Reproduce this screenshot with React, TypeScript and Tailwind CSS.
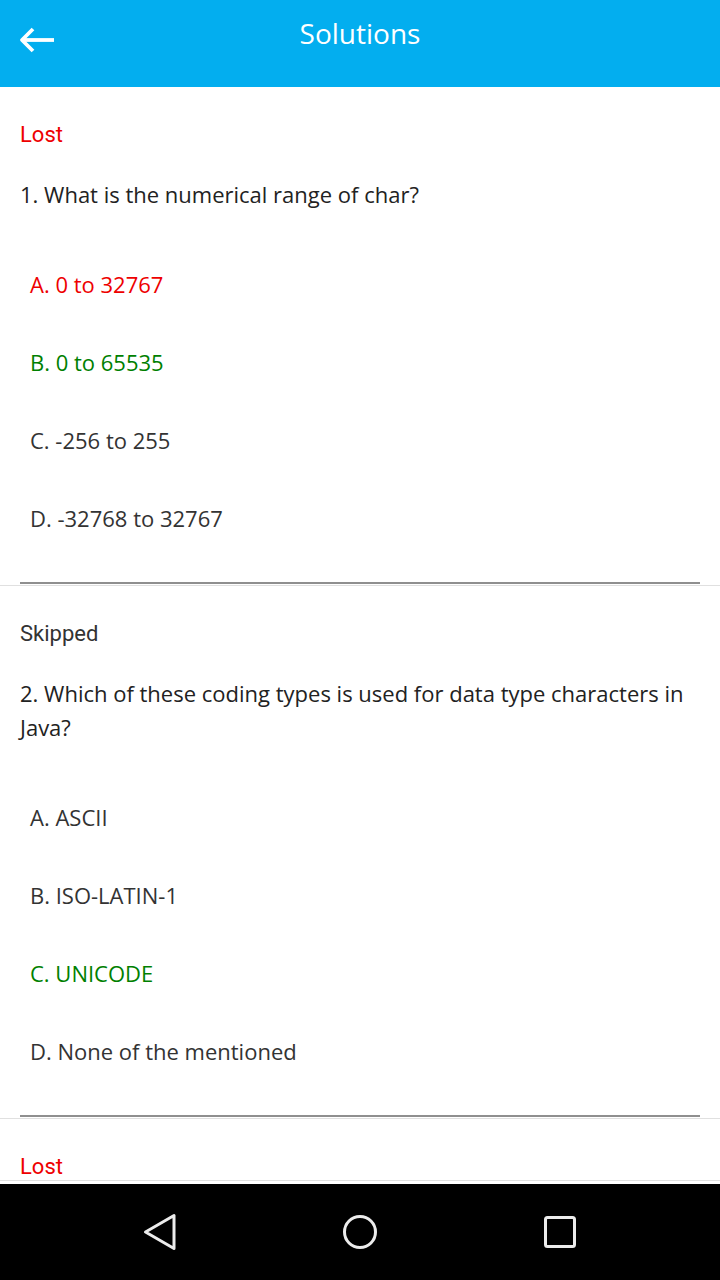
import React from 'react';

type Option = { text: string; tone?: 'wrong' | 'right' };
type Solution = { status: 'Lost' | 'Skipped'; question?: string; options: Option[] };

const solutions: Solution[] = [
  {
    status: 'Lost',
    question: '1. What is the numerical range of char?',
    options: [
      { text: 'A. 0 to 32767', tone: 'wrong' },
      { text: 'B. 0 to 65535', tone: 'right' },
      { text: 'C. -256 to 255' },
      { text: 'D. -32768 to 32767' },
    ],
  },
  {
    status: 'Skipped',
    question: '2. Which of these coding types is used for data type characters in Java?',
    options: [
      { text: 'A. ASCII' },
      { text: 'B. ISO-LATIN-1' },
      { text: 'C. UNICODE', tone: 'right' },
      { text: 'D. None of the mentioned' },
    ],
  },
  { status: 'Lost', options: [] },
];

const toneClass = (tone?: Option['tone']) =>
  tone === 'wrong' ? 'text-[#ee0000]' : tone === 'right' ? 'text-[#008000]' : 'text-[#333333]';

function SolutionCard({ item }: { item: Solution }) {
  return (
    <section className="border-b border-[#e0e0e0] px-5 pt-[36px] pb-px">
      <p
        className={`font-['Roboto',sans-serif] text-[22px] leading-[24px] ${
          item.status === 'Lost' ? 'text-[#ee0000]' : 'text-[#333333]'
        }`}
      >
        {item.status}
      </p>
      {item.question && (
        <>
          <p className="mt-[30px] text-[22px] leading-[34px] text-[#222222]">{item.question}</p>
          <ul className="mt-[34px]">
            {item.options.map((o) => (
              <li key={o.text} className={`flex h-[78px] items-center pl-[10px] text-[22px] ${toneClass(o.tone)}`}>
                {o.text}
              </li>
            ))}
          </ul>
          <div className="mt-[25px] h-[2px] bg-[#8f8f8f]" />
        </>
      )}
    </section>
  );
}

export default function App() {
  return (
    <div className="flex h-[1280px] w-[720px] flex-col overflow-hidden bg-white font-['Open_Sans',sans-serif]">
      <header className="grid h-[87px] shrink-0 grid-cols-[1fr_auto_1fr] bg-[#03aeef]">
        <div className="pl-[19px] pt-[26px]">
          <svg width="36" height="28" viewBox="0 0 36 28" fill="none" stroke="#ffffff" strokeWidth="3.8" strokeLinejoin="round">
            <path d="M35 14H3" />
            <path d="M14 3L3 14L14 25" />
          </svg>
        </div>
        <h1 className="pt-[14px] text-[28px] leading-[38px] text-white">Solutions</h1>
        <div />
      </header>

      <main className="flex-1 overflow-hidden">
        {solutions.map((s, i) => (
          <SolutionCard key={i} item={s} />
        ))}
      </main>

      <nav className="flex h-[96px] shrink-0 items-center justify-center bg-black">
        <div className="flex w-[200px] justify-center">
          <svg width="40" height="40" viewBox="0 0 40 40" fill="none" stroke="#ececec" strokeWidth="3" strokeLinejoin="round">
            <path d="M5.5 20L34 3.5V36.5Z" />
          </svg>
        </div>
        <div className="flex w-[200px] justify-center">
          <svg width="40" height="40" viewBox="0 0 40 40" fill="none" stroke="#ececec" strokeWidth="3">
            <circle cx="20" cy="20" r="15.5" />
          </svg>
        </div>
        <div className="flex w-[200px] justify-center">
          <svg width="40" height="40" viewBox="0 0 40 40" fill="none" stroke="#ececec" strokeWidth="3">
            <rect x="5.5" y="5.5" width="29" height="29" rx="2" />
          </svg>
        </div>
      </nav>
    </div>
  );
}
